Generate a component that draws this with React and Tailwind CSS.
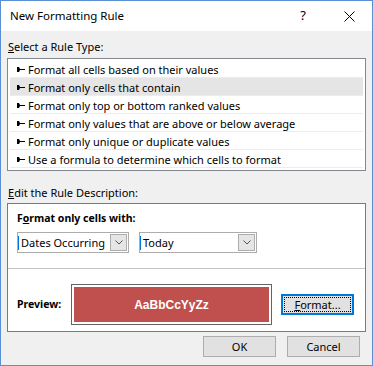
import React from "react";

const rules = [
  "Format all cells based on their values",
  "Format only cells that contain",
  "Format only top or bottom ranked values",
  "Format only values that are above or below average",
  "Format only unique or duplicate values",
  "Use a formula to determine which cells to format",
];

function Pointer() {
  return (
    <svg width="8" height="5" viewBox="0 0 8 5" className="shrink-0">
      <polygon points="0,0 2,0 3,2 8,2 8,3 3,3 2,5 0,5" fill="#000" />
    </svg>
  );
}

function Chevron() {
  return (
    <svg width="8" height="5" viewBox="0 0 8 5">
      <polyline points="0.5,0.5 4,4 7.5,0.5" fill="none" stroke="#555" strokeWidth="1" />
    </svg>
  );
}

function Dropdown({ label, width }) {
  return (
    <div className={`${width} h-[21px] border border-[#acacac] bg-white flex items-center`}>
      <div className="w-[1px] h-[14px] bg-[#0078d7]" />
      <span className="ml-[2px] flex-1 leading-none">{label}</span>
      <div className="w-[17px] h-[17px] mr-[1px] border border-[#adadad] bg-[#e5e5e5] flex items-center justify-center">
        <Chevron />
      </div>
    </div>
  );
}

export default function App() {
  return (
    <div className="w-[373px] h-[366px] border border-[#5a8fd6] bg-[#f0f0f0] flex flex-col font-['Noto_Sans',sans-serif] text-[11px] text-black">
      {/* Title bar */}
      <div className="h-[30px] bg-white flex items-center shrink-0">
        <span className="pl-[9px] text-[11.5px] flex-1">New Formatting Rule</span>
        <div className="w-[46px] h-full flex items-center justify-center text-[13px]">?</div>
        <div className="w-[46px] h-full flex items-center justify-center">
          <svg width="11" height="11" viewBox="0 0 11 11">
            <line x1="0.5" y1="0.5" x2="10.5" y2="10.5" stroke="#000" strokeWidth="1" />
            <line x1="10.5" y1="0.5" x2="0.5" y2="10.5" stroke="#000" strokeWidth="1" />
          </svg>
        </div>
      </div>

      {/* Body */}
      <div className="flex-1 flex flex-col px-[6px]">
        <div className="mt-[9px] pl-[1px] leading-[14px]">
          <span className="underline">S</span>elect a Rule Type:
        </div>
        <div className="mt-[4px] h-[113px] border border-[#828790] bg-white pt-[1px]">
          {rules.map((r, i) => (
            <div
              key={r}
              className={`mx-[2px] h-[18px] border-b border-[#ececec] flex items-center gap-[3px] pl-[7px] pt-[1px] ${
                i === 1 ? "bg-[#e5e5e5]" : ""
              }`}
            >
              <Pointer />
              <span className="leading-none">{r}</span>
            </div>
          ))}
        </div>

        <div className="mt-[15px] pl-[1px] leading-[14px]">
          <span className="underline">E</span>dit the Rule Description:
        </div>
        <div className="mt-[3px] h-[129px] border border-[#7a7a7a] bg-white flex flex-col">
          <div className="pt-[7px] px-[9px] leading-[14px] font-bold text-[10.5px]">
            F<span className="underline">o</span>rmat only cells with:
          </div>
          <div className="mt-[7px] px-[9px] flex gap-[10px]">
            <Dropdown label="Dates Occurring" width="w-[112px]" />
            <Dropdown label="Today" width="w-[118px]" />
          </div>
          <div className="mt-[15px] h-[1px] bg-[#c4c4c4]" />
          <div className="mt-[15px] px-[9px] flex items-center">
            <span className="w-[54px] font-bold text-[10.5px]">Preview:</span>
            <div className="w-[201px] h-[41px] border border-[#646464] p-[2px]">
              <div className="w-full h-full bg-[#c0504d] flex items-center justify-center text-white font-bold text-[12px] font-['Liberation_Sans',sans-serif]">
                AaBbCcYyZz
              </div>
            </div>
            <div className="ml-[9px] w-[73px] h-[21px] border-2 border-[#0078d7] bg-[#e1e1e1] p-[1px]">
              <div className="w-full h-full border border-dotted border-black flex items-center justify-center leading-none">
                <span className="underline">F</span>ormat...
              </div>
            </div>
          </div>
        </div>

        <div className="mt-[4px] flex justify-end gap-[11px] pr-[6px]">
          <div className="w-[73px] h-[21px] border border-[#adadad] bg-[#e1e1e1] flex items-center justify-center leading-none">
            OK
          </div>
          <div className="w-[73px] h-[21px] border border-[#adadad] bg-[#e1e1e1] flex items-center justify-center leading-none">
            Cancel
          </div>
        </div>
      </div>
    </div>
  );
}
